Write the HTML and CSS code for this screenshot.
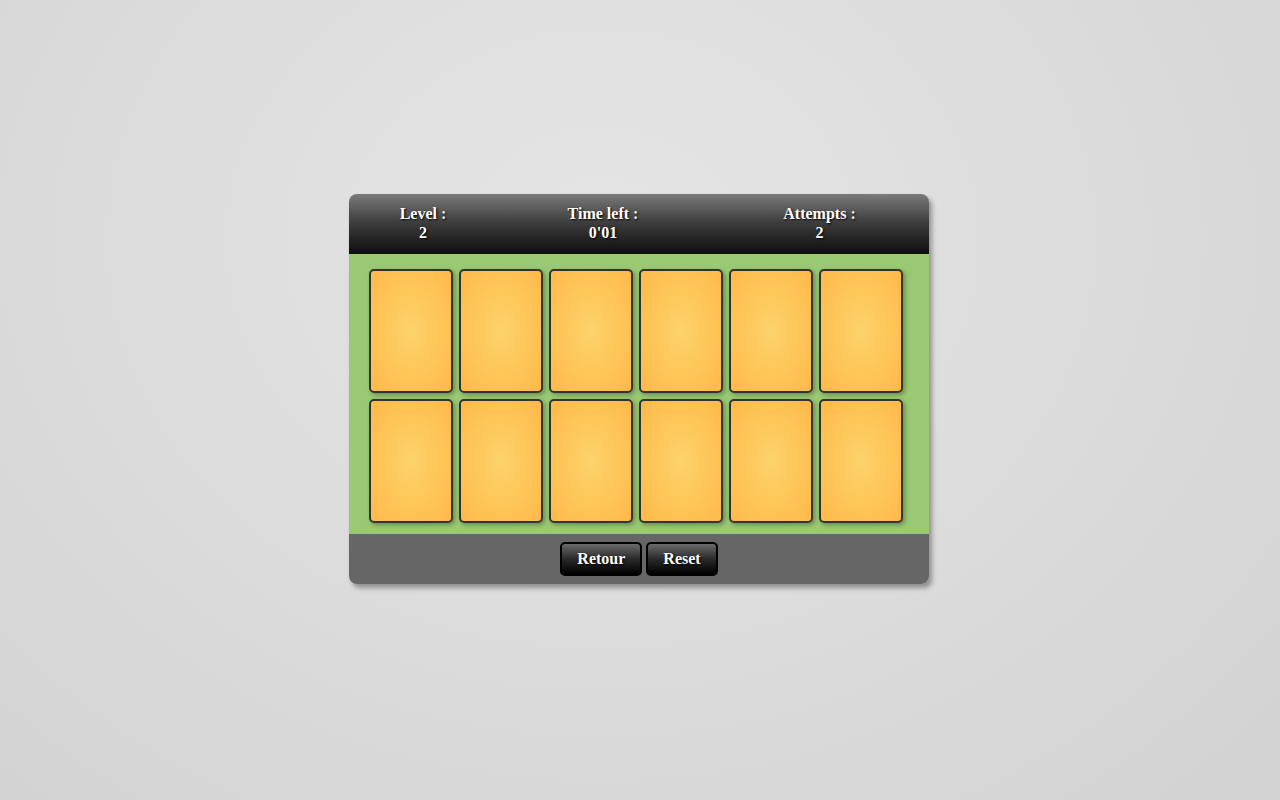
FILE: index.html
```html
<!DOCTYPE html>
<html lang="en">
<head>
  <meta charset="UTF-8" />
  <title>Memory</title>
  <link rel="stylesheet" href="styles.css">
</head>
<body>
  <div class="game">
    <div class="game-header">
      <div class="stat">Level :<br><span id="level">2</span></div>
      <div class="stat">Time left :<br><span id="time">0'01</span></div>
      <div class="stat">Attempts :<br><span id="attempts">2</span></div>
    </div>

    <div class="board">
      <div class="card"></div>
      <div class="card"></div>
      <div class="card"></div>
      <div class="card"></div>
      <div class="card"></div>
      <div class="card"></div>
      <div class="card"></div>
      <div class="card"></div>
      <div class="card"></div>
      <div class="card"></div>
      <div class="card"></div>
      <div class="card"></div>
    </div>

    <div class="game-footer">
      <button type="button" class="btn">Retour</button>
      <button type="button" class="btn">Reset</button>
    </div>
  </div>
</body>
</html>
```

FILE: styles.css
```css
/* Base */
* {
  box-sizing: border-box;
}

html {
  height: 100%;
}

body {
  margin: 0;
  min-height: 100%;
  font-family: "Liberation Serif", "Times New Roman", serif;
  background: radial-gradient(ellipse at 47% 30%, #e5e5e5 0%, #dcdcdc 50%, #d2d2d2 100%);
  overflow: hidden;
}

/* Game panel */
.game {
  width: 580px;
  margin: 194px 0 0 calc(50% - 291px);
  border-radius: 8px;
  overflow: hidden;
  box-shadow: 3px 4px 5px rgba(0, 0, 0, 0.35);
}

.game-header {
  height: 60px;
  padding: 10px 0 0 1px;
  display: grid;
  grid-template-columns: 146px 214px 1fr;
  background: linear-gradient(to bottom, #7a7a7a 0%, #3a3a3a 50%, #0e0e0e 100%);
}

.stat {
  text-align: center;
  color: #fff;
  font-weight: bold;
  font-size: 16px;
  line-height: 19px;
  text-shadow: 1px 1px 2px #000;
}

/* Board */
.board {
  height: 280px;
  padding: 15px 20px 11px;
  display: grid;
  grid-template-columns: repeat(6, 84px);
  grid-auto-rows: 124px;
  gap: 6px;
  background: #99c972;
}

.card {
  border: 2px solid #333;
  border-radius: 5px;
  background: radial-gradient(ellipse at center, #fcd36b 0%, #fec659 50%, #ffb94a 100%);
  box-shadow: 2px 2px 4px rgba(0, 0, 0, 0.3);
  cursor: pointer;
}

/* Footer */
.game-footer {
  height: 50px;
  padding-top: 8px;
  display: flex;
  justify-content: center;
  align-items: flex-start;
  gap: 4px;
  background: #666;
}

.btn {
  height: 34px;
  padding: 0 15px;
  border: 2px solid #000;
  border-radius: 5px;
  font-family: inherit;
  font-weight: bold;
  font-size: 16px;
  color: #fff;
  text-shadow: 1px 1px 2px #000;
  background: linear-gradient(to bottom, #6a6a6a 0%, #2a2a2a 50%, #000 100%);
  cursor: pointer;
}
```
